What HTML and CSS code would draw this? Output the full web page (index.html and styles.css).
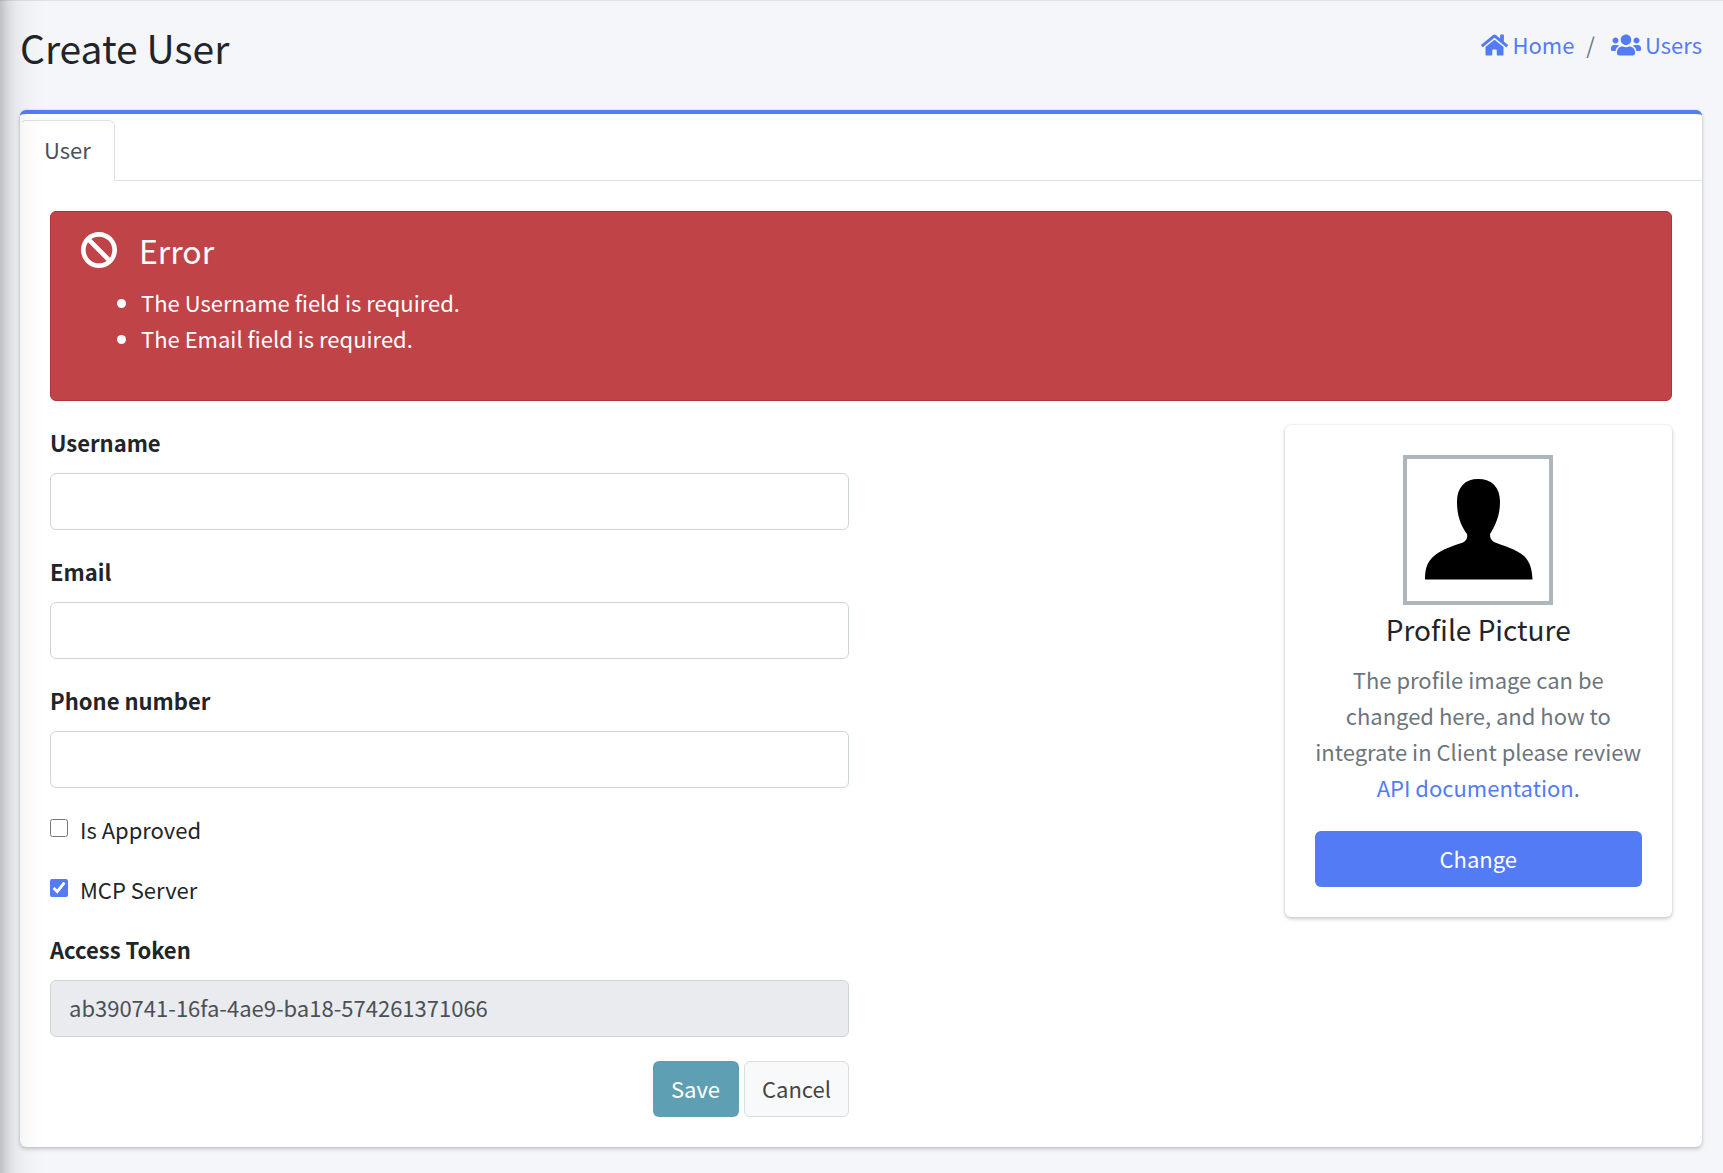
FILE: index.html
```html
<!DOCTYPE html>
<html lang="en">
<head>
<meta charset="utf-8">
<meta name="viewport" content="width=device-width, initial-scale=1">
<title>Create User</title>
<link rel="stylesheet" href="styles.css">
</head>
<body>
<div class="sidebar-edge"></div>
<header class="page-header">
  <h1>Create User</h1>
  <nav class="breadcrumb" aria-label="Breadcrumb">
    <a href="#"><svg class="icon-home" viewBox="0 0 576 512" aria-hidden="true"><path d="M280.37 148.26L96 300.11V464a16 16 0 0 0 16 16l112.06-.29a16 16 0 0 0 15.92-16V368a16 16 0 0 1 16-16h64a16 16 0 0 1 16 16v95.64a16 16 0 0 0 16 16.05L464 480a16 16 0 0 0 16-16V300L295.67 148.26a12.19 12.19 0 0 0-15.3 0zM571.6 251.47L488 182.56V44.05a12 12 0 0 0-12-12h-56a12 12 0 0 0-12 12v72.61L318.47 43a48 48 0 0 0-61 0L4.34 251.47a12 12 0 0 0-1.6 16.9l25.5 31A12 12 0 0 0 45.15 301l235.22-193.74a12.19 12.19 0 0 1 15.3 0L530.9 301a12 12 0 0 0 16.9-1.6l25.5-31a12 12 0 0 0-1.7-16.93z"/></svg>Home</a>
    <span class="separator">/</span>
    <a href="#"><svg class="icon-users" viewBox="0 0 640 512" aria-hidden="true"><path d="M96 224c35.3 0 64-28.7 64-64s-28.7-64-64-64-64 28.7-64 64 28.7 64 64 64zm448 0c35.3 0 64-28.7 64-64s-28.7-64-64-64-64 28.7-64 64 28.7 64 64 64zm32 32h-64c-17.6 0-33.5 7.1-45.1 18.6 40.3 22.1 68.9 62 75.1 109.4h66c17.7 0 32-14.3 32-32v-32c0-35.3-28.7-64-64-64zm-256 0c61.9 0 112-50.1 112-112S381.9 32 320 32 208 82.1 208 144s50.1 112 112 112zm76.8 32h-8.3c-20.8 10-43.9 16-68.5 16s-47.6-6-68.5-16h-8.3C179.6 288 128 339.6 128 403.2V432c0 26.5 21.5 48 48 48h288c26.5 0 48-21.5 48-48v-28.8c0-63.6-51.6-115.2-115.2-115.2zm-223.7-13.4C161.5 263.1 145.6 256 128 256H64c-35.3 0-64 28.7-64 64v32c0 17.7 14.3 32 32 32h65.9c6.3-47.4 34.9-87.3 75.2-109.4z"/></svg>Users</a>
  </nav>
</header>
<main class="card">
  <nav class="tabs"><a class="tab" href="#">User</a></nav>
  <div class="card-body">
    <section class="alert" role="alert">
      <h2><svg class="icon-ban" viewBox="8 8 496 496" aria-hidden="true"><path d="M256 8C119.034 8 8 119.033 8 256s111.034 248 248 248 248-111.034 248-248S392.967 8 256 8zm130.108 117.892c65.448 65.448 70 165.481 20.677 235.637L150.47 105.216c70.204-49.356 170.226-44.735 235.638 20.676zM125.892 386.108c-65.448-65.448-70-165.481-20.677-235.637L361.53 406.784c-70.203 49.356-170.226 44.736-235.638-20.676z"/></svg>Error</h2>
      <ul>
        <li>The Username field is required.</li>
        <li>The Email field is required.</li>
      </ul>
    </section>
    <div class="columns">
      <form class="user-form">
        <div class="field">
          <label for="username">Username</label>
          <input type="text" id="username">
        </div>
        <div class="field">
          <label for="email">Email</label>
          <input type="text" id="email">
        </div>
        <div class="field">
          <label for="phone">Phone number</label>
          <input type="text" id="phone">
        </div>
        <div class="check">
          <input type="checkbox" id="approved">
          <label for="approved">Is Approved</label>
        </div>
        <div class="check">
          <input type="checkbox" id="mcp" checked>
          <label for="mcp">MCP Server</label>
        </div>
        <div class="field">
          <label for="token">Access Token</label>
          <input type="text" id="token" value="ab390741-16fa-4ae9-ba18-574261371066" readonly>
        </div>
        <div class="actions">
          <button type="submit" class="btn btn-save">Save</button>
          <button type="button" class="btn btn-cancel">Cancel</button>
        </div>
      </form>
      <aside class="profile">
        <svg class="avatar" viewBox="4 4 142 142" role="img" aria-label="Profile picture"><path d="M75 24C62 24 54 32 54 47C54 61 58 71 64 79C65 83 63 86 60 87.500C50 91 39 94 31 101C24 107 22 114 22 124.500H129.500C129 114 127 107 121 101C113 94 101 91 91 87C88 85 87 83 87 79C92 71 97 61 97 47C97 32 89 24 75 24Z"/></svg>
        <h3>Profile Picture</h3>
        <p>The profile image can be changed here, and how to integrate in Client please review <a href="#">API documentation</a>.</p>
        <button type="button" class="btn btn-change">Change</button>
      </aside>
    </div>
  </div>
</main>
</body>
</html>
```
FILE: styles.css
```css
* {
  box-sizing: border-box;
}

body {
  margin: 0;
  min-height: 100vh;
  border-top: 1px solid #dee2e6;
  padding: 0 21px 24px 20px;
  background: #f4f6f9;
  color: #212529;
  font: 22px/36px "Noto Sans CJK SC", "Noto Sans", sans-serif;
}

h1, h2, h3, p, ul {
  margin: 0;
  font-weight: 400;
}

a {
  color: #537bf6;
  text-decoration: none;
}

svg {
  fill: currentColor;
}

/* Shadow cast by the collapsed sidebar */
.sidebar-edge {
  position: fixed;
  z-index: 10;
  top: -60px;
  bottom: -60px;
  left: -60px;
  width: 60px;
  box-shadow: 0 21px 42px rgba(0, 0, 0, .25), 0 15px 15px rgba(0, 0, 0, .22);
}

.page-header {
  display: flex;
  justify-content: space-between;
  align-items: flex-start;
  padding: 18px 0 35px;
}

h1 {
  font-size: 39px;
  line-height: 56px;
}

.breadcrumb {
  display: flex;
  padding-top: 7px;
}

.breadcrumb a {
  display: flex;
  align-items: center;
  gap: 4px;
}

.breadcrumb svg {
  margin-top: 2px;
}

.icon-home {
  width: 27px;
  height: 24px;
}

.icon-users {
  width: 30px;
  height: 24px;
}

.separator {
  padding: 0 16px 0 12px;
  color: #6c757d;
}

.card {
  border-top: 4px solid #537bf6;
  border-radius: 6px;
  background: #fff;
  box-shadow: 0 0 2px rgba(0, 0, 0, .13), 0 2px 4px rgba(0, 0, 0, .2);
}

.tabs {
  display: flex;
  padding-top: 6px;
  border-bottom: 1px solid #dee2e6;
}

.tab {
  margin-bottom: -1px;
  padding: 10px 23px 13px;
  border: 1px solid #dee2e6;
  border-bottom-color: #fff;
  border-left-color: transparent;
  border-radius: 6px 6px 0 0;
  background: #fff;
  color: #495057;
}

.card-body {
  padding: 30px;
}

.alert {
  margin-bottom: 24px;
  padding: 16px 30px 44px;
  border: 1px solid #b2323a;
  border-radius: 6px;
  background: #bf4347;
  color: #fff;
}

.alert h2 {
  display: flex;
  align-items: center;
  gap: 22px;
  margin-bottom: 12px;
  font-size: 32px;
  line-height: 44px;
}

.icon-ban {
  width: 36px;
  height: 36px;
}

.alert ul {
  padding-left: 60px;
}

.columns {
  display: grid;
  grid-template-columns: repeat(4, minmax(0, 1fr));
  gap: 24px;
  align-items: start;
}

.user-form {
  display: flex;
  flex-direction: column;
  grid-column: span 2;
  gap: 24px;
}

.field {
  display: flex;
  flex-direction: column;
  gap: 14px;
}

.field label,
.check label {
  line-height: 34px;
}

.field label {
  font-weight: 700;
}

.field input {
  width: 100%;
  height: 57px;
  padding: 0 18px 3px;
  border: 1px solid #ced4da;
  border-radius: 6px;
  background: #fff;
  color: #495057;
  font: inherit;
}

.field input[readonly] {
  background: #e9ebef;
}

.check {
  display: flex;
  gap: 12px;
  height: 36px;
}

.check input {
  width: 18px;
  height: 18px;
  margin: 7px 0 0;
  accent-color: #537bf6;
}

.actions {
  display: flex;
  justify-content: flex-end;
  gap: 5px;
}

.btn {
  height: 56px;
  padding: 0 17px 3px;
  border: 1px solid transparent;
  border-radius: 6px;
  color: #fff;
  font: inherit;
}

.btn-save {
  padding-right: 18px;
  background: #5f9fb3;
}

.btn-cancel {
  border-color: #ddd;
  background: #f8f9fa;
  color: #444;
}

.btn-change {
  width: 100%;
  background: #537bf6;
}

.profile {
  grid-column: 4;
  padding: 30px;
  border-radius: 6px;
  box-shadow: 0 0 2px rgba(0, 0, 0, .13), 0 2px 4px rgba(0, 0, 0, .2);
  text-align: center;
}

.avatar {
  display: block;
  width: 150px;
  height: 150px;
  margin: 0 auto;
  border: 4px solid #adb5bd;
  color: #000;
}

.profile h3 {
  margin-bottom: 8px;
  font-size: 28px;
  line-height: 48px;
}

.profile p {
  margin-bottom: 26px;
  color: #6c757d;
}
```
